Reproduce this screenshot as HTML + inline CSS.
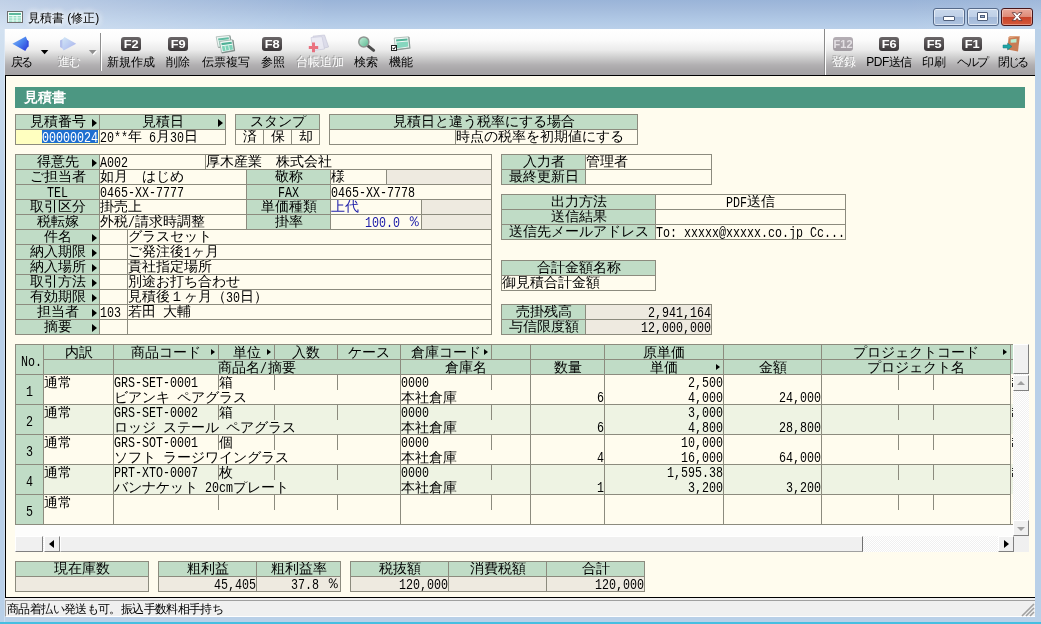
<!DOCTYPE html>
<html lang="ja"><head><meta charset="utf-8"><title>見積書 (修正)</title>
<style>
*{margin:0;padding:0;}
html,body{width:1041px;height:624px;overflow:hidden;}
body{position:relative;background:#B3C8E2;font-family:"Liberation Sans",sans-serif;font-size:12px;color:#000;}
#wrap{position:absolute;left:0;top:0;width:1041px;height:624px;will-change:transform;}
#frame{position:absolute;left:0;top:0;width:1041px;height:624px;background:linear-gradient(to bottom,#9AB4D8 0,#A3BBDC 8px,#B0C8E5 20px,#BAD0EA 29px,#BAD0EA 100%);}
#frameb{position:absolute;left:0;top:29px;width:1041px;height:595px;background:linear-gradient(to right,#B9D0E8 0,#B9D0E8 4px,#CBDCEF 4px,#CBDCEF 5px,#B9D0E8 5px,#B9D0E8 100%);}
#frametop{position:absolute;left:0;top:0;width:1041px;height:29px;background:linear-gradient(to right,rgba(255,255,255,.38) 0,rgba(255,255,255,.22) 120px,rgba(255,255,255,0) 330px,rgba(255,255,255,0) 900px,rgba(255,255,255,.06) 1041px);}
#leftglow{position:absolute;left:0;top:29px;width:5px;height:170px;background:linear-gradient(to bottom,rgba(255,255,255,.36),rgba(255,255,255,0));}
#bottomglow{position:absolute;left:0;top:622px;width:1041px;height:2px;background:#46BEE1;}
#title{position:absolute;left:28px;top:9px;height:18px;line-height:18px;font-size:12px;color:#000;text-shadow:0 0 6px #fff,0 0 6px #fff,0 0 8px #fff;white-space:nowrap;}
#toolbar{position:absolute;left:5px;top:29px;width:1030px;height:46px;background:linear-gradient(to bottom,#FFFFFF 0,#FBFBFB 11px,#EBEBEB 21px,#D0D0D0 28px,#B2B0B2 36px,#A8A6A8 41px,#A4A2A4 46px);}
#tbline{position:absolute;left:5px;top:75px;width:1030px;height:1px;background:#000;}
#client{position:absolute;left:5px;top:76px;width:1030px;height:522px;background:#FFFCEE;border-left:1px solid #000;border-bottom:1px solid #000;box-sizing:border-box;}
#status{position:absolute;left:5px;top:598px;width:1030px;height:19px;background:#F0F0F0;}
#status div{position:absolute;left:0;top:2px;width:1030px;height:17px;box-sizing:border-box;border-top:1px solid #A0A0A0;border-left:1px solid #A0A0A0;border-bottom:1px solid #fff;}
#status span{position:absolute;left:1px;top:1px;line-height:14px;font-size:12px;white-space:nowrap;letter-spacing:-.62px;}
.c{position:absolute;box-sizing:border-box;border:1px solid #8C8B7E;font-family:"Liberation Mono",sans-serif;font-size:14px;line-height:14px;white-space:nowrap;overflow:hidden;padding-top:0px;}
.c i,.t i{font-style:normal;font-family:"Liberation Mono",monospace;display:inline-block;transform:translateY(1px) scaleX(.8333);transform-origin:0 0;margin-right:calc(var(--n)*-1.4px);}
.t i{transform:scaleX(.8333) !important;}
.t{position:absolute;font-family:"Liberation Mono",sans-serif;font-size:14px;line-height:14px;height:14px;white-space:nowrap;overflow:hidden;}
.r{position:absolute;}
.arr{position:absolute;width:0;height:0;}
.c u{position:absolute;right:2px;top:3.5px;width:0;height:0;border-left:5px solid #000;border-top:4px solid transparent;border-bottom:4px solid transparent;text-decoration:none;}
.c u.g{top:4px;right:3px;border-left-width:4px;border-top-width:3.5px;border-bottom-width:3.5px;}
.band{position:absolute;background:#4C9782;color:#fff;font-weight:bold;font-size:14px;line-height:20px;padding-left:9px;box-sizing:border-box;font-family:"Liberation Sans",sans-serif;}
.sel{position:absolute;left:26px;top:0;width:56px;height:13px;background:#1E6FD0;color:#fff;overflow:hidden;direction:rtl;}
.sel i{direction:ltr;}
.fk{position:absolute;width:20px;height:13.5px;border-radius:3px;background:linear-gradient(#6A6668,#3A3638);color:#fff;font:bold 10.5px/15px "Liberation Sans",sans-serif;text-align:center;}
.fk b{display:inline-block;transform:scaleX(1.22);}
.fk.dis{background:linear-gradient(#B4AEB4,#A29CA2);color:#E4E0E4;}
.fk.dis b{transform:scaleX(1.05);}
.tl{position:absolute;height:14px;line-height:14px;font-size:12px;text-align:center;white-space:nowrap;color:#000;}
.tl.dis{color:#fff;text-shadow:-1px -1px 0 #9A9A9A;}
.wb{position:absolute;top:8px;width:32px;height:18px;box-sizing:border-box;border:1px solid #566A8A;border-radius:3px;background:linear-gradient(#C9D8EC 0,#BFD0E7 48%,#A3B9D9 52%,#AEC3DF 100%);box-shadow:inset 0 0 0 1px rgba(255,255,255,.55);}
.wb.wc{border-color:#47161A;background:linear-gradient(#E9A99B 0,#DE8B78 48%,#C8432A 52%,#D4583A 100%);box-shadow:inset 0 0 0 1px rgba(255,255,255,.35);}
.sep{position:absolute;width:1px;}
</style></head><body>
<div id="wrap"><div id="frame"></div><div id="frameb"></div><div id="frametop"></div><div id="bottomglow"></div><div id="leftglow"></div>
<div id="title">見積書 (修正)</div>
<div id="toolbar"></div><div id="tbline"></div>
<svg style="position:absolute;left:0;top:0" width="1041" height="76" viewBox="0 0 1041 76">
<defs>
<linearGradient id="gb" x1="0" y1="0" x2="1" y2="1"><stop offset="0" stop-color="#8CC0F8"/><stop offset=".5" stop-color="#4C84EE"/><stop offset="1" stop-color="#2C3CDC"/></linearGradient>
<linearGradient id="gf" x1="0" y1="0" x2="1" y2="1"><stop offset="0" stop-color="#D4E8F6"/><stop offset=".5" stop-color="#BCCCF2"/><stop offset="1" stop-color="#A8ACE8"/></linearGradient>
<linearGradient id="gl" x1="0" y1="0" x2="1" y2="1"><stop offset="0" stop-color="#C8F0DC"/><stop offset="1" stop-color="#58B890"/></linearGradient>
</defs>
<!-- title icon -->
<rect x="7.5" y="11.5" width="15" height="11" fill="#F2FFFA" stroke="#6E6E6E"/>
<rect x="9" y="13" width="12" height="2" fill="#5DB89C"/>
<rect x="9" y="16" width="12" height="1.5" fill="#96DCC4"/><rect x="9" y="18.3" width="12" height="1.5" fill="#96DCC4"/><rect x="9" y="20.5" width="12" height="1.3" fill="#96DCC4"/>
<rect x="12.5" y="15" width="1" height="7" fill="#F2FFFA"/><rect x="16.5" y="15" width="1" height="7" fill="#F2FFFA"/>
<!-- back / forward -->
<path d="M25.6 38.4 L28.7 41.2 L28.7 46.6 L25.3 49.2 Z" fill="#3450DC"/>
<path d="M12.4 43.8 L25.8 36.5 L26.9 39.3 L26.9 48 L25.3 50.9 Z" fill="url(#gb)"/>
<path d="M40.9 50 h7.4 l-3.7 4.2 Z" fill="#000"/>
<path d="M64 38.6 L60 40.6 L60 46.9 L63.4 49 Z" fill="#B4C0EC"/>
<path d="M76.2 43.8 L64.5 36.9 L62.4 39.6 L62.4 47.8 L63.5 50.6 Z" fill="url(#gf)"/>
<path d="M89.9 51 h7.4 l-3.7 4.2 Z" fill="#fff"/><path d="M88.9 50 h7.4 l-3.7 4.2 Z" fill="#8E8E8E"/>
<rect x="100" y="33" width="1" height="38" fill="#8E8E8E"/><rect x="101" y="33" width="1" height="38" fill="#fff"/>
<rect x="824" y="29" width="1" height="46" fill="#8A8A8A"/><rect x="825" y="29" width="1" height="46" fill="#fff"/>
<!-- copy icon -->
<g stroke-linejoin="round">
<path d="M216.2 36.8 L229.6 35.4 L231.6 45.2 L218.2 47.2 Z" fill="#EEF6F3" stroke="#A8B8B2" stroke-width=".8"/>
<path d="M229.9 35.6 L231.9 45.4 L218.4 47.5" fill="none" stroke="#8E9C98" stroke-width="1.1"/>
<path d="M218 38.4 L228.6 37.3 L229 39.3 L218.4 40.5 Z" fill="#62BCA2"/>
<path d="M218.7 41.3 L229.3 40.1 L230.2 44.3 L219.6 45.8 Z" fill="#8FD8C0"/>
<path d="M219.6 41.4 L232.6 39.8 L234.2 50.4 L221.6 52.6 Z" fill="#F2FAF7" stroke="#9AACA6" stroke-width=".8"/>
<path d="M232.9 40 L234.5 50.7 L221.8 52.9" fill="none" stroke="#808E8A" stroke-width="1.2"/>
<path d="M221.3 43 L231.6 41.7 L232 43.8 L221.7 45.2 Z" fill="#4FB096"/>
<path d="M221.9 46.2 L232.3 44.8 L233 49.4 L222.8 51.2 Z" fill="#7DD2B8"/>
<path d="M225 46 L225.9 50.6 M228.6 45.4 L229.5 50" stroke="#E8FAF4" stroke-width=".8"/>
</g>
<!-- ledger add (disabled) -->
<g opacity=".75">
<path d="M313 36.2 L324.5 35 L328.6 47 L317 49.6 Z" fill="#D4D4E6" stroke="#B4B4CC" stroke-width=".7"/>
<path d="M311 37.6 L322 36.6 L324.5 49 L313.2 50.6 Z" fill="#E6E6F2" stroke="#BCBCD2" stroke-width=".7"/>
<path d="M312 43 h3 v-0 M308.8 46 h3.2 v-3.4 h3 v3.4 h3.2 v3 h-3.2 v3.2 h-3 v-3.2 h-3.2 Z" fill="#E8485C"/>
</g>
<!-- search -->
<line x1="367.6" y1="45.6" x2="373.6" y2="50.4" stroke="#4C4C4C" stroke-width="3" stroke-linecap="round"/>
<circle cx="363.8" cy="41.9" r="5" fill="url(#gl)" stroke="#8E9490" stroke-width="1.5"/>
<!-- function icon -->
<path d="M394.2 38 L408.6 36.8 L409.6 47.8 L395.6 49.6 Z" fill="#F0F8F5" stroke="#A2B2AC" stroke-width=".8"/>
<path d="M408.9 37 L409.9 48.1 L395.8 49.9" fill="none" stroke="#8A9894" stroke-width="1.1"/>
<path d="M396 39.4 L407.4 38.4 L407.6 40.4 L396.2 41.5 Z" fill="#56B49A"/>
<path d="M396.4 42.6 L407.8 41.5 L408.4 46.6 L397 48.2 Z" fill="#86D6BE"/>
<rect x="391.5" y="45.5" width="5" height="5" fill="#fff" stroke="#222" stroke-width="1"/>
<path d="M392.6 47.8 L393.8 49.2 L395.8 46.4" fill="none" stroke="#000" stroke-width="1"/>
<!-- close door -->
<path d="M1008.6 37 L1019.8 36.2 L1018 51.6 L1007.4 49.4 Z" fill="#C87C54"/>
<path d="M1008.6 37 L1010 36 L1019.8 36.2 L1009.2 38.4 Z" fill="#E0A078"/>
<path d="M1010.6 39.4 L1016.6 38.8 L1016.4 42.4 L1010.6 42.8 Z" fill="#B8ECD0"/>
<path d="M1003 45 h4.6 v-1.8 l4.4 3.3 l-4.4 3.4 v-1.9 h-4.6 Z" fill="#1EA4A4" stroke="#147C84" stroke-width=".5"/>
</svg>
<div class="wb" style="left:933px;"><span style="position:absolute;left:9px;top:7px;width:10px;height:3px;background:#fff;border:1px solid #50607C;border-radius:1px;"></span></div>
<div class="wb" style="left:967px;"><span style="position:absolute;left:9px;top:3px;width:9px;height:7px;background:#fff;border:1px solid #50607C;border-radius:1px;"></span><span style="position:absolute;left:12px;top:6px;width:5px;height:3px;background:#9FB4D2;border:1px solid #50607C;box-sizing:border-box;"></span></div>
<div class="wb wc" style="left:1001px;"><svg width="30" height="15" viewBox="0 0 30 15" style="position:absolute;left:0;top:0"><path d="M10.2 3.6 h3.2 l1.7 2.2 l1.7-2.2 h3.2 l-3.2 4 l3.2 4 h-3.2 l-1.7-2.2 l-1.7 2.2 h-3.2 l3.2-4 Z" fill="#fff" stroke="#5A3030" stroke-width=".8"/></svg></div>
<div class="tl" style="left:1px;width:40px;top:55px;letter-spacing:-2px;padding-right:2px;">戻る</div>
<div class="tl dis" style="left:48px;width:41px;top:55px;letter-spacing:-1.5px;padding-right:1.5px;">進む</div>
<div class="fk" style="left:121px;top:37px;"><b>F2</b></div>
<div class="tl" style="left:97px;width:67px;top:55px;">新規作成</div>
<div class="fk" style="left:168px;top:37px;"><b>F9</b></div>
<div class="tl" style="left:156px;width:43px;top:55px;">削除</div>
<div class="tl" style="left:192px;width:67px;top:55px;">伝票複写</div>
<div class="fk" style="left:262px;top:37px;"><b>F8</b></div>
<div class="tl" style="left:251px;width:43px;top:55px;">参照</div>
<div class="tl dis" style="left:286px;width:67px;top:55px;">台帳追加</div>
<div class="tl" style="left:345px;width:42px;top:55px;">検索</div>
<div class="tl" style="left:380px;width:42px;top:55px;">機能</div>
<div class="fk dis" style="left:833px;top:37px;"><b>F12</b></div>
<div class="tl dis" style="left:823px;width:42px;top:55px;">登録</div>
<div class="fk" style="left:879px;top:37px;"><b>F6</b></div>
<div class="tl" style="left:857px;width:64px;top:55px;letter-spacing:-0.5px;padding-right:0.5px;">PDF送信</div>
<div class="fk" style="left:924px;top:37px;"><b>F5</b></div>
<div class="tl" style="left:913px;width:42px;top:55px;">印刷</div>
<div class="fk" style="left:962px;top:37px;"><b>F1</b></div>
<div class="tl" style="left:947px;width:49px;top:55px;letter-spacing:-2px;padding-right:2px;">ヘルプ</div>
<div class="tl" style="left:988px;width:49px;top:55px;letter-spacing:-2.3px;padding-right:2.3px;">閉じる</div>
<div id="client"></div>
<div class="band" style="left:15px;top:87px;width:1010px;height:21px;">見積書</div>
<div class="c" style="left:15px;top:114px;width:85px;height:16px;background:#C0DCC6;text-align:center;">見積番号<u></u></div>
<div class="c" style="left:99px;top:114px;width:127px;height:16px;background:#C0DCC6;text-align:center;">見積日<u></u></div>
<div class="c" style="left:15px;top:129px;width:85px;height:16px;background:#FFFFC0;overflow:hidden;"><span class="sel"><i style="--n:10">0000000024</i></span></div>
<div class="c" style="left:99px;top:129px;width:127px;height:16px;background:#FFFCEE;"><i style="--n:4">20**</i>年<i style="--n:2">&nbsp;6</i>月<i style="--n:2">30</i>日</div>
<div class="c" style="left:235px;top:114px;width:85px;height:16px;background:#C0DCC6;text-align:center;">スタンプ</div>
<div class="c" style="left:235px;top:129px;width:29px;height:16px;background:#FFFCEE;text-align:center;">済</div>
<div class="c" style="left:263px;top:129px;width:29px;height:16px;background:#FFFCEE;text-align:center;">保</div>
<div class="c" style="left:291px;top:129px;width:29px;height:16px;background:#FFFCEE;text-align:center;">却</div>
<div class="c" style="left:329px;top:114px;width:309px;height:16px;background:#C0DCC6;text-align:center;">見積日と違う税率にする場合</div>
<div class="c" style="left:329px;top:129px;width:127px;height:16px;background:#FFFCEE;"></div>
<div class="c" style="left:455px;top:129px;width:183px;height:16px;background:#FFFCEE;">時点の税率を初期値にする</div>
<div class="c" style="left:15px;top:154px;width:85px;height:16px;background:#C0DCC6;text-align:center;">得意先<u></u></div>
<div class="c" style="left:15px;top:169px;width:85px;height:16px;background:#C0DCC6;text-align:center;">ご担当者</div>
<div class="c" style="left:15px;top:184px;width:85px;height:16px;background:#C0DCC6;text-align:center;"><i style="--n:3">TEL</i></div>
<div class="c" style="left:15px;top:199px;width:85px;height:16px;background:#C0DCC6;text-align:center;">取引区分</div>
<div class="c" style="left:15px;top:214px;width:85px;height:16px;background:#C0DCC6;text-align:center;">税転嫁</div>
<div class="c" style="left:15px;top:229px;width:85px;height:16px;background:#C0DCC6;text-align:center;">件名<u></u></div>
<div class="c" style="left:15px;top:244px;width:85px;height:16px;background:#C0DCC6;text-align:center;">納入期限<u></u></div>
<div class="c" style="left:15px;top:259px;width:85px;height:16px;background:#C0DCC6;text-align:center;">納入場所<u></u></div>
<div class="c" style="left:15px;top:274px;width:85px;height:16px;background:#C0DCC6;text-align:center;">取引方法<u></u></div>
<div class="c" style="left:15px;top:289px;width:85px;height:16px;background:#C0DCC6;text-align:center;">有効期限<u></u></div>
<div class="c" style="left:15px;top:304px;width:85px;height:16px;background:#C0DCC6;text-align:center;">担当者<u></u></div>
<div class="c" style="left:15px;top:319px;width:85px;height:16px;background:#C0DCC6;text-align:center;">摘要<u></u></div>
<div class="c" style="left:99px;top:154px;width:107px;height:16px;background:#FFFCEE;"><i style="--n:4">A002</i></div>
<div class="c" style="left:205px;top:154px;width:287px;height:16px;background:#FFFCEE;">厚木産業　株式会社</div>
<div class="c" style="left:99px;top:169px;width:148px;height:16px;background:#FFFCEE;">如月　はじめ</div>
<div class="c" style="left:246px;top:169px;width:85px;height:16px;background:#C0DCC6;text-align:center;">敬称</div>
<div class="c" style="left:330px;top:169px;width:57px;height:16px;background:#FFFCEE;">様</div>
<div class="c" style="left:386px;top:169px;width:106px;height:16px;background:#EEEAE0;"></div>
<div class="c" style="left:99px;top:184px;width:148px;height:16px;background:#FFFCEE;"><i style="--n:12">0465-XX-7777</i></div>
<div class="c" style="left:246px;top:184px;width:85px;height:16px;background:#C0DCC6;text-align:center;"><i style="--n:3">FAX</i></div>
<div class="c" style="left:330px;top:184px;width:162px;height:16px;background:#FFFCEE;"><i style="--n:12">0465-XX-7778</i></div>
<div class="c" style="left:99px;top:199px;width:148px;height:16px;background:#FFFCEE;">掛売上</div>
<div class="c" style="left:246px;top:199px;width:85px;height:16px;background:#C0DCC6;text-align:center;">単価種類</div>
<div class="c" style="left:330px;top:199px;width:92px;height:16px;background:#FFFCEE;color:#1A1AA8;">上代</div>
<div class="c" style="left:421px;top:199px;width:71px;height:16px;background:#EEEAE0;"></div>
<div class="c" style="left:99px;top:214px;width:148px;height:16px;background:#FFFCEE;">外税<i style="--n:1">/</i>請求時調整</div>
<div class="c" style="left:246px;top:214px;width:85px;height:16px;background:#C0DCC6;text-align:center;">掛率</div>
<div class="c" style="left:330px;top:214px;width:92px;height:16px;background:#FFFCEE;text-align:right;color:#1A1AA8;"><i style="--n:6">100.0&nbsp;</i>％</div>
<div class="c" style="left:421px;top:214px;width:71px;height:16px;background:#EEEAE0;"></div>
<div class="c" style="left:99px;top:229px;width:29px;height:16px;background:#FFFCEE;"></div>
<div class="c" style="left:127px;top:229px;width:365px;height:16px;background:#FFFCEE;">グラスセット</div>
<div class="c" style="left:99px;top:244px;width:29px;height:16px;background:#FFFCEE;"></div>
<div class="c" style="left:127px;top:244px;width:365px;height:16px;background:#FFFCEE;">ご発注後<i style="--n:1">1</i>ヶ月</div>
<div class="c" style="left:99px;top:259px;width:29px;height:16px;background:#FFFCEE;"></div>
<div class="c" style="left:127px;top:259px;width:365px;height:16px;background:#FFFCEE;">貴社指定場所</div>
<div class="c" style="left:99px;top:274px;width:29px;height:16px;background:#FFFCEE;"></div>
<div class="c" style="left:127px;top:274px;width:365px;height:16px;background:#FFFCEE;">別途お打ち合わせ</div>
<div class="c" style="left:99px;top:289px;width:29px;height:16px;background:#FFFCEE;"></div>
<div class="c" style="left:127px;top:289px;width:365px;height:16px;background:#FFFCEE;">見積後１ヶ月（<i style="--n:2">30</i>日）</div>
<div class="c" style="left:99px;top:304px;width:29px;height:16px;background:#FFFCEE;"><i style="--n:3">103</i></div>
<div class="c" style="left:127px;top:304px;width:365px;height:16px;background:#FFFCEE;">若田<i style="--n:1">&nbsp;</i>大輔</div>
<div class="c" style="left:99px;top:319px;width:29px;height:16px;background:#FFFCEE;"></div>
<div class="c" style="left:127px;top:319px;width:365px;height:16px;background:#FFFCEE;"></div>
<div class="c" style="left:501px;top:154px;width:85px;height:16px;background:#C0DCC6;text-align:center;">入力者</div>
<div class="c" style="left:585px;top:154px;width:127px;height:16px;background:#FFFCEE;">管理者</div>
<div class="c" style="left:501px;top:169px;width:85px;height:16px;background:#C0DCC6;text-align:center;">最終更新日</div>
<div class="c" style="left:585px;top:169px;width:127px;height:16px;background:#FFFCEE;"></div>
<div class="c" style="left:501px;top:194px;width:155px;height:16px;background:#C0DCC6;text-align:center;">出力方法</div>
<div class="c" style="left:655px;top:194px;width:191px;height:16px;background:#FFFCEE;text-align:center;"><i style="--n:3">PDF</i>送信</div>
<div class="c" style="left:501px;top:209px;width:155px;height:16px;background:#C0DCC6;text-align:center;">送信結果</div>
<div class="c" style="left:655px;top:209px;width:191px;height:16px;background:#FFFCEE;"></div>
<div class="c" style="left:501px;top:224px;width:155px;height:16px;background:#C0DCC6;text-align:center;">送信先メールアドレス</div>
<div class="c" style="left:655px;top:224px;width:191px;height:16px;background:#FFFCEE;"><i style="--n:27">To:&nbsp;xxxxx@xxxxx.co.jp&nbsp;Cc...</i></div>
<div class="c" style="left:501px;top:260px;width:155px;height:16px;background:#C0DCC6;text-align:center;">合計金額名称</div>
<div class="c" style="left:501px;top:275px;width:155px;height:16px;background:#FFFCEE;">御見積合計金額</div>
<div class="c" style="left:501px;top:304px;width:85px;height:16px;background:#C0DCC6;text-align:center;">売掛残高</div>
<div class="c" style="left:585px;top:304px;width:127px;height:16px;background:#EEEAE0;text-align:right;"><i style="--n:9">2,941,164</i></div>
<div class="c" style="left:501px;top:319px;width:85px;height:16px;background:#C0DCC6;text-align:center;">与信限度額</div>
<div class="c" style="left:585px;top:319px;width:127px;height:16px;background:#EEEAE0;text-align:right;"><i style="--n:10">12,000,000</i></div>
<div class="r" style="left:15px;top:344px;width:1014px;height:208px;background:repeating-conic-gradient(#fff 0 25%,#F0F0F0 0 50%) 0 0/2px 2px;"></div>
<div class="c" style="left:15px;top:344px;width:29px;height:31px;background:#C0DCC6;text-align:center;line-height:33px;padding-left:4px;"><i style="--n:3">No.</i></div>
<div class="c" style="left:43px;top:344px;width:71px;height:16px;background:#C0DCC6;text-align:center;padding-top:1px;">内訳</div>
<div class="c" style="left:113px;top:344px;width:106px;height:16px;background:#C0DCC6;text-align:center;padding-top:1px;">商品コード<u class="g"></u></div>
<div class="c" style="left:218px;top:344px;width:57px;height:16px;background:#C0DCC6;text-align:center;padding-top:1px;">単位<u class="g"></u></div>
<div class="c" style="left:274px;top:344px;width:64px;height:16px;background:#C0DCC6;text-align:center;padding-top:1px;">入数</div>
<div class="c" style="left:337px;top:344px;width:64px;height:16px;background:#C0DCC6;text-align:center;padding-top:1px;">ケース</div>
<div class="c" style="left:400px;top:344px;width:92px;height:16px;background:#C0DCC6;text-align:center;padding-top:1px;">倉庫コード<u class="g"></u></div>
<div class="c" style="left:491px;top:344px;width:40px;height:16px;background:#C0DCC6;text-align:center;padding-top:1px;"></div>
<div class="c" style="left:530px;top:344px;width:75px;height:16px;background:#C0DCC6;text-align:center;padding-top:1px;"></div>
<div class="c" style="left:604px;top:344px;width:120px;height:16px;background:#C0DCC6;text-align:center;padding-top:1px;">原単価</div>
<div class="c" style="left:723px;top:344px;width:99px;height:16px;background:#C0DCC6;text-align:center;padding-top:1px;"></div>
<div class="c" style="left:821px;top:344px;width:190px;height:16px;background:#C0DCC6;text-align:center;padding-top:1px;">プロジェクトコード<u class="g"></u></div>
<div class="c" style="left:43px;top:359px;width:71px;height:16px;background:#C0DCC6;text-align:center;padding-top:1px;"></div>
<div class="c" style="left:113px;top:359px;width:288px;height:16px;background:#C0DCC6;text-align:center;padding-top:1px;">商品名<i style="--n:1">/</i>摘要</div>
<div class="c" style="left:400px;top:359px;width:131px;height:16px;background:#C0DCC6;text-align:center;padding-top:1px;">倉庫名</div>
<div class="c" style="left:530px;top:359px;width:75px;height:16px;background:#C0DCC6;text-align:center;padding-top:1px;">数量</div>
<div class="c" style="left:604px;top:359px;width:120px;height:16px;background:#C0DCC6;text-align:center;padding-top:1px;">単価<u class="g"></u></div>
<div class="c" style="left:723px;top:359px;width:99px;height:16px;background:#C0DCC6;text-align:center;padding-top:1px;">金額</div>
<div class="c" style="left:821px;top:359px;width:190px;height:16px;background:#C0DCC6;text-align:center;padding-top:1px;">プロジェクト名</div>
<div class="r" style="left:1010px;top:344px;width:3px;height:31px;background:#C0DCC6;border-top:1px solid #8C8B7E;border-bottom:1px solid #8C8B7E;border-left:1px solid #8C8B7E;box-sizing:border-box;"></div>
<div class="r" style="left:1010px;top:359px;width:3px;height:1px;background:#8C8B7E;"></div>
<div class="c" style="left:15px;top:374px;width:29px;height:31px;background:#C0DCC6;text-align:center;line-height:33px;"><i style="--n:1">1</i></div>
<div class="c" style="left:43px;top:374px;width:71px;height:31px;background:#FFFCEE;"></div>
<div class="c" style="left:113px;top:374px;width:288px;height:31px;background:#FFFCEE;"></div>
<div class="c" style="left:400px;top:374px;width:131px;height:31px;background:#FFFCEE;"></div>
<div class="c" style="left:530px;top:374px;width:75px;height:31px;background:#FFFCEE;"></div>
<div class="c" style="left:604px;top:374px;width:120px;height:31px;background:#FFFCEE;"></div>
<div class="c" style="left:723px;top:374px;width:99px;height:31px;background:#FFFCEE;"></div>
<div class="c" style="left:821px;top:374px;width:190px;height:31px;background:#FFFCEE;"></div>
<div class="r" style="left:1010px;top:374px;width:3px;height:31px;background:#FFFCEE;border-bottom:1px solid #8C8B7E;border-left:1px solid #8C8B7E;box-sizing:border-box;"></div>
<div class="r" style="left:218px;top:375px;width:1px;height:15px;background:#8C8B7E;"></div>
<div class="r" style="left:274px;top:375px;width:1px;height:15px;background:#8C8B7E;"></div>
<div class="r" style="left:337px;top:375px;width:1px;height:15px;background:#8C8B7E;"></div>
<div class="r" style="left:491px;top:375px;width:1px;height:15px;background:#8C8B7E;"></div>
<div class="r" style="left:898px;top:375px;width:1px;height:15px;background:#8C8B7E;"></div>
<div class="r" style="left:933px;top:375px;width:1px;height:15px;background:#8C8B7E;"></div>
<div class="r" style="left:1012px;top:378px;width:1px;height:1px;background:#222;"></div>
<div class="r" style="left:1012px;top:380px;width:1px;height:1px;background:#222;"></div>
<div class="r" style="left:1012px;top:383px;width:1px;height:4px;background:#222;"></div>
<div class="t" style="left:44px;top:376px;width:69px;text-align:left;">通常</div>
<div class="t" style="left:114px;top:376px;width:104px;text-align:left;"><i style="--n:12">GRS-SET-0001</i></div>
<div class="t" style="left:219px;top:376px;width:55px;text-align:left;">箱</div>
<div class="t" style="left:114px;top:391px;width:286px;text-align:left;">ビアンキ<i style="--n:1">&nbsp;</i>ペアグラス</div>
<div class="t" style="left:401px;top:376px;width:90px;text-align:left;"><i style="--n:4">0000</i></div>
<div class="t" style="left:401px;top:391px;width:129px;text-align:left;">本社倉庫</div>
<div class="t" style="left:531px;top:391px;width:73px;text-align:right;"><i style="--n:1">6</i></div>
<div class="t" style="left:605px;top:376px;width:118px;text-align:right;"><i style="--n:5">2,500</i></div>
<div class="t" style="left:605px;top:391px;width:118px;text-align:right;"><i style="--n:5">4,000</i></div>
<div class="t" style="left:724px;top:391px;width:97px;text-align:right;"><i style="--n:6">24,000</i></div>
<div class="c" style="left:15px;top:404px;width:29px;height:31px;background:#C0DCC6;text-align:center;line-height:33px;"><i style="--n:1">2</i></div>
<div class="c" style="left:43px;top:404px;width:71px;height:31px;background:#EEF3E3;"></div>
<div class="c" style="left:113px;top:404px;width:288px;height:31px;background:#EEF3E3;"></div>
<div class="c" style="left:400px;top:404px;width:131px;height:31px;background:#EEF3E3;"></div>
<div class="c" style="left:530px;top:404px;width:75px;height:31px;background:#EEF3E3;"></div>
<div class="c" style="left:604px;top:404px;width:120px;height:31px;background:#EEF3E3;"></div>
<div class="c" style="left:723px;top:404px;width:99px;height:31px;background:#EEF3E3;"></div>
<div class="c" style="left:821px;top:404px;width:190px;height:31px;background:#EEF3E3;"></div>
<div class="r" style="left:1010px;top:404px;width:3px;height:31px;background:#EEF3E3;border-bottom:1px solid #8C8B7E;border-left:1px solid #8C8B7E;box-sizing:border-box;"></div>
<div class="r" style="left:218px;top:405px;width:1px;height:15px;background:#8C8B7E;"></div>
<div class="r" style="left:274px;top:405px;width:1px;height:15px;background:#8C8B7E;"></div>
<div class="r" style="left:337px;top:405px;width:1px;height:15px;background:#8C8B7E;"></div>
<div class="r" style="left:491px;top:405px;width:1px;height:15px;background:#8C8B7E;"></div>
<div class="r" style="left:898px;top:405px;width:1px;height:15px;background:#8C8B7E;"></div>
<div class="r" style="left:933px;top:405px;width:1px;height:15px;background:#8C8B7E;"></div>
<div class="r" style="left:1012px;top:408px;width:1px;height:1px;background:#222;"></div>
<div class="r" style="left:1012px;top:410px;width:1px;height:1px;background:#222;"></div>
<div class="r" style="left:1012px;top:413px;width:1px;height:4px;background:#222;"></div>
<div class="t" style="left:44px;top:406px;width:69px;text-align:left;">通常</div>
<div class="t" style="left:114px;top:406px;width:104px;text-align:left;"><i style="--n:12">GRS-SET-0002</i></div>
<div class="t" style="left:219px;top:406px;width:55px;text-align:left;">箱</div>
<div class="t" style="left:114px;top:421px;width:286px;text-align:left;">ロッジ<i style="--n:1">&nbsp;</i>ステール<i style="--n:1">&nbsp;</i>ペアグラス</div>
<div class="t" style="left:401px;top:406px;width:90px;text-align:left;"><i style="--n:4">0000</i></div>
<div class="t" style="left:401px;top:421px;width:129px;text-align:left;">本社倉庫</div>
<div class="t" style="left:531px;top:421px;width:73px;text-align:right;"><i style="--n:1">6</i></div>
<div class="t" style="left:605px;top:406px;width:118px;text-align:right;"><i style="--n:5">3,000</i></div>
<div class="t" style="left:605px;top:421px;width:118px;text-align:right;"><i style="--n:5">4,800</i></div>
<div class="t" style="left:724px;top:421px;width:97px;text-align:right;"><i style="--n:6">28,800</i></div>
<div class="c" style="left:15px;top:434px;width:29px;height:31px;background:#C0DCC6;text-align:center;line-height:33px;"><i style="--n:1">3</i></div>
<div class="c" style="left:43px;top:434px;width:71px;height:31px;background:#FFFCEE;"></div>
<div class="c" style="left:113px;top:434px;width:288px;height:31px;background:#FFFCEE;"></div>
<div class="c" style="left:400px;top:434px;width:131px;height:31px;background:#FFFCEE;"></div>
<div class="c" style="left:530px;top:434px;width:75px;height:31px;background:#FFFCEE;"></div>
<div class="c" style="left:604px;top:434px;width:120px;height:31px;background:#FFFCEE;"></div>
<div class="c" style="left:723px;top:434px;width:99px;height:31px;background:#FFFCEE;"></div>
<div class="c" style="left:821px;top:434px;width:190px;height:31px;background:#FFFCEE;"></div>
<div class="r" style="left:1010px;top:434px;width:3px;height:31px;background:#FFFCEE;border-bottom:1px solid #8C8B7E;border-left:1px solid #8C8B7E;box-sizing:border-box;"></div>
<div class="r" style="left:218px;top:435px;width:1px;height:15px;background:#8C8B7E;"></div>
<div class="r" style="left:274px;top:435px;width:1px;height:15px;background:#8C8B7E;"></div>
<div class="r" style="left:337px;top:435px;width:1px;height:15px;background:#8C8B7E;"></div>
<div class="r" style="left:491px;top:435px;width:1px;height:15px;background:#8C8B7E;"></div>
<div class="r" style="left:898px;top:435px;width:1px;height:15px;background:#8C8B7E;"></div>
<div class="r" style="left:933px;top:435px;width:1px;height:15px;background:#8C8B7E;"></div>
<div class="r" style="left:1012px;top:438px;width:1px;height:1px;background:#222;"></div>
<div class="r" style="left:1012px;top:440px;width:1px;height:1px;background:#222;"></div>
<div class="r" style="left:1012px;top:443px;width:1px;height:4px;background:#222;"></div>
<div class="t" style="left:44px;top:436px;width:69px;text-align:left;">通常</div>
<div class="t" style="left:114px;top:436px;width:104px;text-align:left;"><i style="--n:12">GRS-SOT-0001</i></div>
<div class="t" style="left:219px;top:436px;width:55px;text-align:left;">個</div>
<div class="t" style="left:114px;top:451px;width:286px;text-align:left;">ソフト<i style="--n:1">&nbsp;</i>ラージワイングラス</div>
<div class="t" style="left:401px;top:436px;width:90px;text-align:left;"><i style="--n:4">0000</i></div>
<div class="t" style="left:401px;top:451px;width:129px;text-align:left;">本社倉庫</div>
<div class="t" style="left:531px;top:451px;width:73px;text-align:right;"><i style="--n:1">4</i></div>
<div class="t" style="left:605px;top:436px;width:118px;text-align:right;"><i style="--n:6">10,000</i></div>
<div class="t" style="left:605px;top:451px;width:118px;text-align:right;"><i style="--n:6">16,000</i></div>
<div class="t" style="left:724px;top:451px;width:97px;text-align:right;"><i style="--n:6">64,000</i></div>
<div class="c" style="left:15px;top:464px;width:29px;height:31px;background:#C0DCC6;text-align:center;line-height:33px;"><i style="--n:1">4</i></div>
<div class="c" style="left:43px;top:464px;width:71px;height:31px;background:#EEF3E3;"></div>
<div class="c" style="left:113px;top:464px;width:288px;height:31px;background:#EEF3E3;"></div>
<div class="c" style="left:400px;top:464px;width:131px;height:31px;background:#EEF3E3;"></div>
<div class="c" style="left:530px;top:464px;width:75px;height:31px;background:#EEF3E3;"></div>
<div class="c" style="left:604px;top:464px;width:120px;height:31px;background:#EEF3E3;"></div>
<div class="c" style="left:723px;top:464px;width:99px;height:31px;background:#EEF3E3;"></div>
<div class="c" style="left:821px;top:464px;width:190px;height:31px;background:#EEF3E3;"></div>
<div class="r" style="left:1010px;top:464px;width:3px;height:31px;background:#EEF3E3;border-bottom:1px solid #8C8B7E;border-left:1px solid #8C8B7E;box-sizing:border-box;"></div>
<div class="r" style="left:218px;top:465px;width:1px;height:15px;background:#8C8B7E;"></div>
<div class="r" style="left:274px;top:465px;width:1px;height:15px;background:#8C8B7E;"></div>
<div class="r" style="left:337px;top:465px;width:1px;height:15px;background:#8C8B7E;"></div>
<div class="r" style="left:491px;top:465px;width:1px;height:15px;background:#8C8B7E;"></div>
<div class="r" style="left:898px;top:465px;width:1px;height:15px;background:#8C8B7E;"></div>
<div class="r" style="left:933px;top:465px;width:1px;height:15px;background:#8C8B7E;"></div>
<div class="r" style="left:1012px;top:468px;width:1px;height:1px;background:#222;"></div>
<div class="r" style="left:1012px;top:470px;width:1px;height:1px;background:#222;"></div>
<div class="r" style="left:1012px;top:473px;width:1px;height:4px;background:#222;"></div>
<div class="t" style="left:44px;top:466px;width:69px;text-align:left;">通常</div>
<div class="t" style="left:114px;top:466px;width:104px;text-align:left;"><i style="--n:12">PRT-XTO-0007</i></div>
<div class="t" style="left:219px;top:466px;width:55px;text-align:left;">枚</div>
<div class="t" style="left:114px;top:481px;width:286px;text-align:left;">バンナケット<i style="--n:5">&nbsp;20cm</i>プレート</div>
<div class="t" style="left:401px;top:466px;width:90px;text-align:left;"><i style="--n:4">0000</i></div>
<div class="t" style="left:401px;top:481px;width:129px;text-align:left;">本社倉庫</div>
<div class="t" style="left:531px;top:481px;width:73px;text-align:right;"><i style="--n:1">1</i></div>
<div class="t" style="left:605px;top:466px;width:118px;text-align:right;"><i style="--n:8">1,595.38</i></div>
<div class="t" style="left:605px;top:481px;width:118px;text-align:right;"><i style="--n:5">3,200</i></div>
<div class="t" style="left:724px;top:481px;width:97px;text-align:right;"><i style="--n:5">3,200</i></div>
<div class="c" style="left:15px;top:494px;width:29px;height:31px;background:#C0DCC6;text-align:center;line-height:33px;"><i style="--n:1">5</i></div>
<div class="c" style="left:43px;top:494px;width:71px;height:31px;background:#FFFCEE;"></div>
<div class="c" style="left:113px;top:494px;width:288px;height:31px;background:#FFFCEE;"></div>
<div class="c" style="left:400px;top:494px;width:131px;height:31px;background:#FFFCEE;"></div>
<div class="c" style="left:530px;top:494px;width:75px;height:31px;background:#FFFCEE;"></div>
<div class="c" style="left:604px;top:494px;width:120px;height:31px;background:#FFFCEE;"></div>
<div class="c" style="left:723px;top:494px;width:99px;height:31px;background:#FFFCEE;"></div>
<div class="c" style="left:821px;top:494px;width:190px;height:31px;background:#FFFCEE;"></div>
<div class="r" style="left:1010px;top:494px;width:3px;height:31px;background:#FFFCEE;border-bottom:1px solid #8C8B7E;border-left:1px solid #8C8B7E;box-sizing:border-box;"></div>
<div class="r" style="left:218px;top:495px;width:1px;height:15px;background:#8C8B7E;"></div>
<div class="r" style="left:274px;top:495px;width:1px;height:15px;background:#8C8B7E;"></div>
<div class="r" style="left:337px;top:495px;width:1px;height:15px;background:#8C8B7E;"></div>
<div class="r" style="left:491px;top:495px;width:1px;height:15px;background:#8C8B7E;"></div>
<div class="r" style="left:898px;top:495px;width:1px;height:15px;background:#8C8B7E;"></div>
<div class="r" style="left:933px;top:495px;width:1px;height:15px;background:#8C8B7E;"></div>
<div class="t" style="left:44px;top:496px;width:69px;text-align:left;">通常</div>
<div class="r" style="left:15px;top:525px;width:998px;height:11px;background:#FDFDFC;"></div>
<div class="r" style="left:15px;top:536px;width:1014px;height:16px;background:repeating-conic-gradient(#fff 0 25%,#F0F0F0 0 50%) 0 0/2px 2px;"></div>
<div class="r" style="left:15px;top:536px;width:28px;height:16px;background:#F0F0F0;border:1px solid;border-color:#fff #808080 #808080 #fff;box-sizing:border-box;"></div>
<div class="r" style="left:44px;top:536px;width:16px;height:16px;background:#F0F0F0;border:1px solid;border-color:#fff #808080 #808080 #fff;box-sizing:border-box;"></div>
<div class="arr" style="left:49px;top:540px;border-right:5px solid #000;border-top:4px solid transparent;border-bottom:4px solid transparent;"></div>
<div class="r" style="left:60px;top:536px;width:803px;height:16px;background:#F0F0F0;border:1px solid;border-color:#fff #707070 #A0A0A0 #fff;box-sizing:border-box;"></div>
<div class="r" style="left:998px;top:536px;width:16px;height:16px;background:#F0F0F0;border:1px solid;border-color:#fff #808080 #808080 #fff;box-sizing:border-box;"></div>
<div class="arr" style="left:1004px;top:540px;border-left:5px solid #000;border-top:4px solid transparent;border-bottom:4px solid transparent;"></div>
<div class="r" style="left:1014px;top:536px;width:15px;height:16px;background:#F0F0F0;"></div>
<div class="r" style="left:1013px;top:344px;width:16px;height:192px;background:repeating-conic-gradient(#fff 0 25%,#F0F0F0 0 50%) 0 0/2px 2px;"></div>
<div class="r" style="left:1013px;top:344px;width:16px;height:30px;background:#F0F0F0;border:1px solid;border-color:#fff #808080 #808080 #fff;box-sizing:border-box;"></div>
<div class="r" style="left:1013px;top:375px;width:16px;height:16px;background:#F0F0F0;border:1px solid;border-color:#fff #808080 #808080 #fff;box-sizing:border-box;"></div>
<div class="arr" style="left:1017px;top:381px;border-bottom:4px solid #A0A0A0;border-left:4px solid transparent;border-right:4px solid transparent;"></div>
<div class="r" style="left:1013px;top:520px;width:16px;height:16px;background:#F0F0F0;border:1px solid;border-color:#fff #808080 #808080 #fff;box-sizing:border-box;"></div>
<div class="arr" style="left:1017px;top:527px;border-top:4px solid #A0A0A0;border-left:4px solid transparent;border-right:4px solid transparent;"></div>
<div class="c" style="left:15px;top:561px;width:134px;height:16px;background:#C0DCC6;text-align:center;">現在庫数</div>
<div class="c" style="left:15px;top:576px;width:134px;height:16px;background:#EEEAE0;"></div>
<div class="c" style="left:158px;top:561px;width:99px;height:16px;background:#C0DCC6;text-align:center;">粗利益</div>
<div class="c" style="left:256px;top:561px;width:85px;height:16px;background:#C0DCC6;text-align:center;">粗利益率</div>
<div class="c" style="left:158px;top:576px;width:99px;height:16px;background:#EEEAE0;text-align:right;"><i style="--n:6">45,405</i></div>
<div class="c" style="left:256px;top:576px;width:85px;height:16px;background:#EEEAE0;text-align:right;"><i style="--n:5">37.8&nbsp;</i>％</div>
<div class="c" style="left:350px;top:561px;width:99px;height:16px;background:#C0DCC6;text-align:center;">税抜額</div>
<div class="c" style="left:448px;top:561px;width:99px;height:16px;background:#C0DCC6;text-align:center;">消費税額</div>
<div class="c" style="left:546px;top:561px;width:99px;height:16px;background:#C0DCC6;text-align:center;">合計</div>
<div class="c" style="left:350px;top:576px;width:99px;height:16px;background:#EEEAE0;text-align:right;"><i style="--n:7">120,000</i></div>
<div class="c" style="left:448px;top:576px;width:99px;height:16px;background:#EEEAE0;"></div>
<div class="c" style="left:546px;top:576px;width:99px;height:16px;background:#EEEAE0;text-align:right;"><i style="--n:7">120,000</i></div>
<div id="status"><div><span>商品着払い発送も可。振込手数料相手持ち</span></div></div>
<svg style="position:absolute;left:1021px;top:603px" width="14" height="14" viewBox="0 0 14 14"><path d="M13 1 L1 13 M13 5 L5 13 M13 9 L9 13" stroke="#A0A0A0" stroke-width="1.6"/></svg>
</div></body></html>
